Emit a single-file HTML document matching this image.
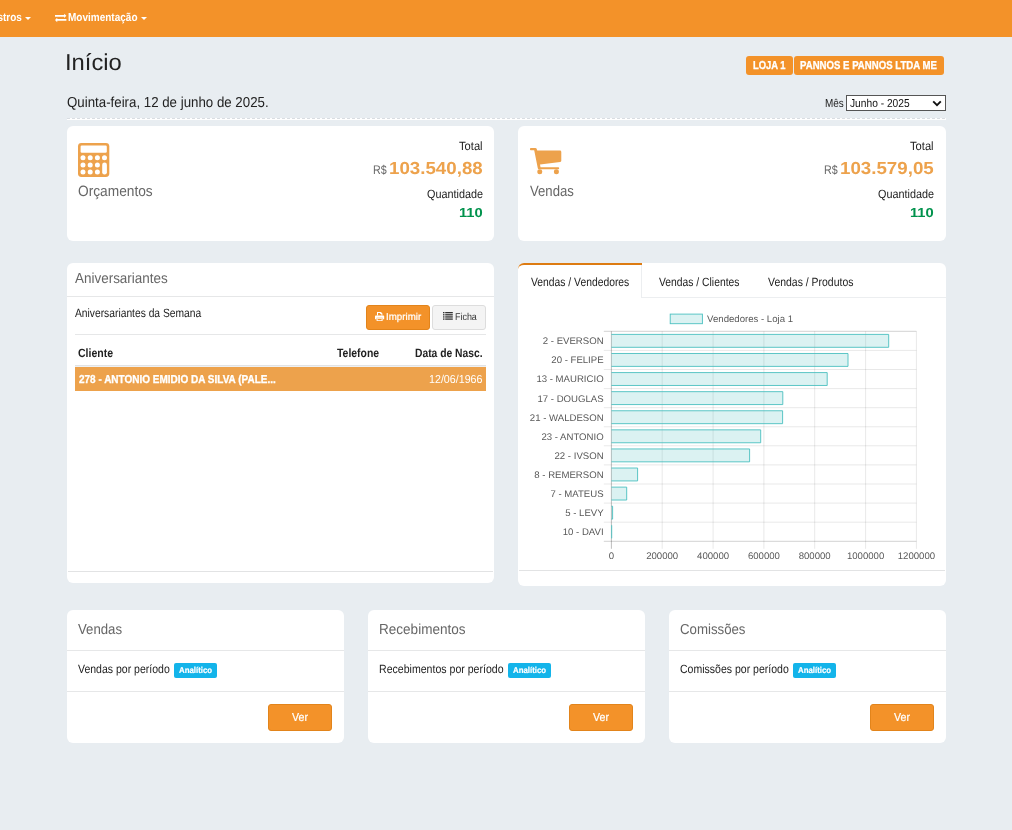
<!DOCTYPE html>
<html lang="pt-BR">
<head>
<meta charset="utf-8">
<title>Início</title>
<style>
*{box-sizing:border-box;margin:0;padding:0}
html,body{width:1012px;height:830px;overflow:hidden;background:#e8edf1}
body{font-family:"Liberation Sans",sans-serif;font-size:12px;color:#222;line-height:1}
#page{will-change:transform;text-rendering:geometricPrecision;position:relative;width:1012px;height:830px;overflow:hidden;background:#e8edf1}
#page div,#page svg,#page nav,.caret{position:absolute}
header,main,section,article{display:block}
.t{position:absolute;display:block;white-space:nowrap;font-weight:normal;transform-origin:0 0}
nav{left:0;top:0;width:1012px;height:37px;background:#f39229}
.caret{width:0;height:0;border-left:3px solid transparent;border-right:3px solid transparent;border-top:3px solid #fff}
.box{background:#fff;border-radius:6px}
.hl{height:1px;background:#e6e7e8}
.sb{-webkit-text-stroke:0.2px currentColor}
.xb{-webkit-text-stroke:0.3px currentColor}
.tag{background:#f39229;border-radius:3px}
.btn{border-radius:3px}
.btn-o{background:#f39229;border:1px solid #e2841b}
.btn-g{background:#f4f4f4;border:1px solid #ddd}
.info{background:#13b4ea;border-radius:2px}
svg{display:block;overflow:visible}
svg text{font-family:"Liberation Sans",sans-serif}
</style>
</head>
<body>
<div id="page">

<nav>
<span class="t" style="left:-27.41px;top:12px;font-size:11.5px;line-height:12px;color:#fff;font-weight:bold;transform:scaleX(0.870)">Cadastros</span>
<span class="caret" style="left:25px;top:17px"></span>
<svg style="left:55px;top:11.8px" width="11.4" height="11.4" viewBox="0 0 1792 1792"><path d="M0 480H1440V256L1792 608L1440 960V736H0ZM1792 1120H352V896L0 1248L352 1600V1376H1792Z" fill="#fff"/></svg>
<span class="t" style="left:68.13px;top:12px;font-size:11.5px;line-height:12px;color:#fff;font-weight:bold;transform:scaleX(0.870)">Movimentação</span>
<span class="caret" style="left:141px;top:17px"></span>
</nav>
<header>
<h1 class="t" style="left:65.41px;top:49px;font-size:23px;line-height:26px;color:#222;transform:scaleX(1.033)">Início</h1>
<div class="tag" style="left:746px;top:56px;width:47px;height:19px"></div>
<div class="tag" style="left:794px;top:56px;width:150px;height:19px"></div>
<span class="t xb" style="left:752.87px;top:60px;font-size:11.5px;line-height:12px;color:#fff;font-weight:bold;transform:scaleX(0.818)">LOJA 1</span>
<span class="t xb" style="left:800.36px;top:60px;font-size:11.5px;line-height:12px;color:#fff;font-weight:bold;transform:scaleX(0.836)">PANNOS E PANNOS LTDA ME</span>
<span class="t" style="left:66.57px;top:95px;font-size:14.5px;line-height:16px;color:#222;transform:scaleX(0.916)">Quinta-feira, 12 de junho de 2025.</span>
<span class="t" style="left:824.98px;top:98px;font-size:11.5px;line-height:12px;color:#222;transform:scaleX(0.864)">Mês</span>
<div style="left:846px;top:95px;width:100px;height:16px;background:#fff;border:1px solid #555"></div>
<span class="t" style="left:850.14px;top:98px;font-size:11.5px;line-height:12px;color:#111;transform:scaleX(0.888)">Junho - 2025</span>
<svg style="left:932px;top:100px" width="10" height="7" viewBox="0 0 10 7"><path d="M1.2 1.3L5 5.1l3.8-3.8" fill="none" stroke="#111" stroke-width="1.9"/></svg>
<div style="left:67px;top:118px;width:879px;height:2px;background:#fff"></div>
<div style="left:67px;top:118px;width:879px;height:1px;background:repeating-linear-gradient(90deg,#d9dde2 0,#d9dde2 3px,transparent 3px,transparent 5px)"></div>
</header>
<main>
<section>
<div class="box" style="left:67px;top:126px;width:427px;height:115px"></div>
<div class="box" style="left:518px;top:126px;width:428px;height:115px"></div>
<svg style="left:78.4px;top:143px" width="31.3" height="34" viewBox="0 0 313 340">
<rect x="0" y="0" width="313" height="340" rx="34" fill="#eda24c"/>
<rect x="26" y="26" width="262" height="72" rx="12" fill="#fff"/>
<g fill="#fff">
<circle cx="50" cy="148" r="25"/><circle cx="122" cy="148" r="25"/><circle cx="194" cy="148" r="25"/><circle cx="265" cy="148" r="25"/>
<circle cx="50" cy="219" r="25"/><circle cx="122" cy="219" r="25"/><circle cx="194" cy="219" r="25"/>
<circle cx="50" cy="290" r="25"/><circle cx="122" cy="290" r="25"/><circle cx="194" cy="290" r="25"/>
<rect x="242" y="194" width="47" height="121" rx="23"/>
</g></svg>
<svg style="left:530px;top:147.8px" width="31.3" height="26.2" viewBox="0 0 313 262">
<g fill="#eda24c">
<path d="M0 8 Q0 0 8 0 H52 Q66 0 69 14 L72 26 H300 Q313 26 313 39 V128 Q313 139 302 141 L100 165 L105 192 H282 Q292 192 292 202 Q292 212 282 212 H90 Q80 212 78 202 L42 22 H8 Q0 22 0 14 Z"/>
<circle cx="98" cy="238" r="25"/><circle cx="264" cy="238" r="25"/>
</g></svg>
<span class="t" style="left:77.85px;top:183px;font-size:15px;line-height:17px;color:#666;transform:scaleX(0.914)">Orçamentos</span>
<span class="t" style="left:530.14px;top:183px;font-size:15px;line-height:17px;color:#666;transform:scaleX(0.876)">Vendas</span>
<span class="t" style="left:459.05px;top:139px;font-size:12px;line-height:14px;color:#222;transform:scaleX(0.931)">Total</span>
<span class="t" style="left:372.52px;top:163px;font-size:12.5px;line-height:14px;color:#666;transform:scaleX(0.854)">R$</span>
<span class="t" style="left:389.02px;top:158px;font-size:17.5px;line-height:20px;color:#eda24c;font-weight:bold;transform:scaleX(1.070)">103.540,88</span>
<span class="t" style="left:426.69px;top:187px;font-size:12px;line-height:14px;color:#222;transform:scaleX(0.902)">Quantidade</span>
<span class="t" style="left:459.07px;top:205px;font-size:13px;line-height:15px;color:#00924c;font-weight:bold;transform:scaleX(1.131)">110</span>
<span class="t" style="left:910.45px;top:139px;font-size:12px;line-height:14px;color:#222;transform:scaleX(0.931)">Total</span>
<span class="t" style="left:823.92px;top:163px;font-size:12.5px;line-height:14px;color:#666;transform:scaleX(0.854)">R$</span>
<span class="t" style="left:840.42px;top:158px;font-size:17.5px;line-height:20px;color:#eda24c;font-weight:bold;transform:scaleX(1.070)">103.579,05</span>
<span class="t" style="left:878.09px;top:187px;font-size:12px;line-height:14px;color:#222;transform:scaleX(0.902)">Quantidade</span>
<span class="t" style="left:910.47px;top:205px;font-size:13px;line-height:15px;color:#00924c;font-weight:bold;transform:scaleX(1.131)">110</span>
</section>
<section>
<div class="box" style="left:67px;top:263px;width:427px;height:320px"></div>
<h2 class="t" style="left:74.77px;top:271px;font-size:14.5px;line-height:16px;color:#666;transform:scaleX(0.928)">Aniversariantes</h2>
<div class="hl" style="left:67px;top:296px;width:427px"></div>
<span class="t" style="left:74.78px;top:306px;font-size:12px;line-height:14px;color:#222;transform:scaleX(0.856)">Aniversariantes da Semana</span>
<div class="btn btn-o" style="left:366px;top:305px;width:64px;height:25px"></div>
<div class="btn btn-g" style="left:432px;top:305px;width:54px;height:25px"></div>
<svg style="left:374.8px;top:312px" width="9.2" height="9" viewBox="0 0 92 90">
<g fill="#fff"><path d="M20 0h40l14 14v22H64V20H52V10H30v26H20z"/>
<path d="M8 34h76q8 0 8 8v30H76V58H16v14H0V42q0-8 8-8z"/>
<path d="M16 62h60v28H16zm10 8v12h40V70z" fill-rule="evenodd"/></g></svg>
<span class="t sb" style="left:385.8px;top:312px;font-size:10px;line-height:11px;color:#fff;transform:scaleX(0.974)">Imprimir</span>
<svg style="left:442.6px;top:312.2px" width="9.8" height="7.8" viewBox="0 0 98 78">
<g fill="#333"><rect x="0" y="0" width="15" height="13"/><rect x="22" y="0" width="76" height="13"/>
<rect x="0" y="21.5" width="15" height="13"/><rect x="22" y="21.5" width="76" height="13"/>
<rect x="0" y="43" width="15" height="13"/><rect x="22" y="43" width="76" height="13"/>
<rect x="0" y="64.5" width="15" height="13"/><rect x="22" y="64.5" width="76" height="13"/></g></svg>
<span class="t" style="left:455.07px;top:312px;font-size:10px;line-height:11px;color:#333;transform:scaleX(0.893)">Ficha</span>
<div class="hl" style="left:75px;top:334px;width:411px"></div>
<span class="t" style="left:78.27px;top:346px;font-size:12px;line-height:14px;color:#222;font-weight:bold;transform:scaleX(0.877)">Cliente</span>
<span class="t" style="left:337.28px;top:346px;font-size:12px;line-height:14px;color:#222;font-weight:bold;transform:scaleX(0.870)">Telefone</span>
<span class="t" style="left:415.41px;top:346px;font-size:12px;line-height:14px;color:#222;font-weight:bold;transform:scaleX(0.858)">Data de Nasc.</span>
<div style="left:75px;top:365px;width:411px;height:1px;background:#e2e3e4"></div>
<div style="left:75px;top:366px;width:411px;height:1px;background:#eef1f4"></div>
<div style="left:75px;top:367px;width:411px;height:24px;background:#eda24c"></div>
<span class="t xb" style="left:78.55px;top:374px;font-size:11.5px;line-height:12px;color:#fff;font-weight:bold;transform:scaleX(0.868)">278 - ANTONIO EMIDIO DA SILVA (PALE...</span>
<span class="t" style="left:429.19px;top:374px;font-size:11.5px;line-height:12px;color:#fff;transform:scaleX(0.929)">12/06/1966</span>
<div class="hl" style="left:68px;top:571px;width:425px;background:#e2e3e4"></div>
</section>
<section>
<div class="box" style="left:518px;top:263px;width:428px;height:323px"></div>
<div style="left:642px;top:297px;width:304px;height:1px;background:#eceef0"></div>
<div style="left:641px;top:265px;width:1px;height:33px;background:#eceef0"></div>
<div style="left:518px;top:263px;width:124px;height:10px;border-top:2px solid #dd7b12;border-top-left-radius:6px"></div>
<span class="t" style="left:530.85px;top:275px;font-size:12px;line-height:14px;color:#222;transform:scaleX(0.861)">Vendas / Vendedores</span>
<span class="t" style="left:658.55px;top:275px;font-size:12px;line-height:14px;color:#222;transform:scaleX(0.861)">Vendas / Clientes</span>
<span class="t" style="left:768.45px;top:275px;font-size:12px;line-height:14px;color:#222;transform:scaleX(0.871)">Vendas / Produtos</span>
<div class="hl" style="left:519px;top:570px;width:426px;background:#e2e3e4"></div>
<svg style="left:518px;top:298px" width="428" height="272" viewBox="518 298 428 272">
<rect x="670.2" y="314.1" width="32.2" height="9.6" fill="rgba(75,192,192,0.2)" stroke="rgb(75,192,192)" stroke-width="0.9"/>
<text x="707.1" y="322.4" font-size="9.6" fill="#595959">Vendedores - Loja 1</text>
<g stroke="rgba(0,0,0,0.11)" stroke-width="0.85" fill="none">
<path d="M662.2 331.3V548.8"/>
<path d="M713.1 331.3V548.8"/>
<path d="M763.9 331.3V548.8"/>
<path d="M814.7 331.3V548.8"/>
<path d="M865.6 331.3V548.8"/>
<path d="M916.4 331.3V548.8"/>
<path d="M603.8 350.4H916.4"/>
<path d="M603.8 369.5H916.4"/>
<path d="M603.8 388.6H916.4"/>
<path d="M603.8 407.7H916.4"/>
<path d="M603.8 426.8H916.4"/>
<path d="M603.8 445.8H916.4"/>
<path d="M603.8 464.9H916.4"/>
<path d="M603.8 484.0H916.4"/>
<path d="M603.8 503.1H916.4"/>
<path d="M603.8 522.2H916.4"/>
</g>
<g stroke="rgba(0,0,0,0.2)" stroke-width="0.9" fill="none">
<path d="M603.8 331.3H916.4"/>
<path d="M603.8 541.3H916.4"/>
</g>
<path d="M611.4 331.3V548.8" stroke="rgba(0,0,0,0.3)" stroke-width="0.85" fill="none"/>
<g fill="rgba(75,192,192,0.2)" stroke="none">
<rect x="611.4" y="334.40" width="277.3" height="12.90"/>
<rect x="611.4" y="353.49" width="236.6" height="12.90"/>
<rect x="611.4" y="372.58" width="215.8" height="12.90"/>
<rect x="611.4" y="391.67" width="171.4" height="12.90"/>
<rect x="611.4" y="410.76" width="171.2" height="12.90"/>
<rect x="611.4" y="429.85" width="149.3" height="12.90"/>
<rect x="611.4" y="448.94" width="138.2" height="12.90"/>
<rect x="611.4" y="468.03" width="26.2" height="12.90"/>
<rect x="611.4" y="487.12" width="15.3" height="12.90"/>
<rect x="611.4" y="506.21" width="1.2" height="12.90"/>
<rect x="611.4" y="525.30" width="0.3" height="12.90"/>
</g>
<g fill="none" stroke="rgb(75,192,192)" stroke-width="0.9">
<path d="M611.4 334.40H888.7V347.30H611.4"/>
<path d="M611.4 353.49H848.0V366.39H611.4"/>
<path d="M611.4 372.58H827.2V385.48H611.4"/>
<path d="M611.4 391.67H782.8V404.57H611.4"/>
<path d="M611.4 410.76H782.6V423.66H611.4"/>
<path d="M611.4 429.85H760.7V442.75H611.4"/>
<path d="M611.4 448.94H749.6V461.84H611.4"/>
<path d="M611.4 468.03H637.6V480.93H611.4"/>
<path d="M611.4 487.12H626.7V500.02H611.4"/>
<path d="M611.4 506.21H612.6V519.11H611.4"/>
<path d="M611.4 525.30H611.7V538.20H611.4"/>
</g>
<g font-size="9.6" fill="#595959" text-anchor="end">
<text x="603.6" y="344.2">2 - EVERSON</text>
<text x="603.6" y="363.3">20 - FELIPE</text>
<text x="603.6" y="382.4">13 - MAURICIO</text>
<text x="603.6" y="401.5">17 - DOUGLAS</text>
<text x="603.6" y="420.6">21 - WALDESON</text>
<text x="603.6" y="439.7">23 - ANTONIO</text>
<text x="603.6" y="458.8">22 - IVSON</text>
<text x="603.6" y="477.9">8 - REMERSON</text>
<text x="603.6" y="497.0">7 - MATEUS</text>
<text x="603.6" y="516.1">5 - LEVY</text>
<text x="603.6" y="535.2">10 - DAVI</text>
</g>
<g font-size="9.6" fill="#595959" text-anchor="middle">
<text x="611.4" y="559.0">0</text>
<text x="662.2" y="559.0">200000</text>
<text x="713.1" y="559.0">400000</text>
<text x="763.9" y="559.0">600000</text>
<text x="814.7" y="559.0">800000</text>
<text x="865.6" y="559.0">1000000</text>
<text x="916.4" y="559.0">1200000</text>
</g>
</svg>
</section>
<section>
<div class="box" style="left:67px;top:610px;width:277px;height:133px"></div>
<h2 class="t" style="left:78.44px;top:622px;font-size:14.5px;line-height:16px;color:#666;transform:scaleX(0.910)">Vendas</h2>
<div class="hl" style="left:67px;top:650px;width:277px"></div>
<span class="t" style="left:78.45px;top:662px;font-size:12px;line-height:14px;color:#222;transform:scaleX(0.876)">Vendas por período</span>
<div class="info" style="left:174.0px;top:663px;width:43px;height:15px"></div>
<span class="t sb" style="left:179px;top:665px;font-size:8.5px;line-height:10px;color:#fff;font-weight:bold;transform:scaleX(0.922)">Analítico</span>
<div class="hl" style="left:67px;top:691px;width:277px"></div>
<div class="btn btn-o" style="left:268px;top:704px;width:64px;height:27px"></div>
<span class="t sb" style="left:291.65px;top:712px;font-size:11.5px;line-height:12px;color:#fff;transform:scaleX(0.922)">Ver</span>
</section>
<section>
<div class="box" style="left:368px;top:610px;width:277px;height:133px"></div>
<h2 class="t" style="left:378.89px;top:622px;font-size:14.5px;line-height:16px;color:#666;transform:scaleX(0.934)">Recebimentos</h2>
<div class="hl" style="left:368px;top:650px;width:277px"></div>
<span class="t" style="left:379.13px;top:662px;font-size:12px;line-height:14px;color:#222;transform:scaleX(0.881)">Recebimentos por período</span>
<div class="info" style="left:508.0px;top:663px;width:43px;height:15px"></div>
<span class="t sb" style="left:513px;top:665px;font-size:8.5px;line-height:10px;color:#fff;font-weight:bold;transform:scaleX(0.922)">Analítico</span>
<div class="hl" style="left:368px;top:691px;width:277px"></div>
<div class="btn btn-o" style="left:569px;top:704px;width:64px;height:27px"></div>
<span class="t sb" style="left:592.65px;top:712px;font-size:11.5px;line-height:12px;color:#fff;transform:scaleX(0.922)">Ver</span>
</section>
<section>
<div class="box" style="left:669px;top:610px;width:277px;height:133px"></div>
<h2 class="t" style="left:680.03px;top:622px;font-size:14.5px;line-height:16px;color:#666;transform:scaleX(0.913)">Comissões</h2>
<div class="hl" style="left:669px;top:650px;width:277px"></div>
<span class="t" style="left:680.17px;top:662px;font-size:12px;line-height:14px;color:#222;transform:scaleX(0.877)">Comissões por período</span>
<div class="info" style="left:793.3px;top:663px;width:43px;height:15px"></div>
<span class="t sb" style="left:798.3px;top:665px;font-size:8.5px;line-height:10px;color:#fff;font-weight:bold;transform:scaleX(0.922)">Analítico</span>
<div class="hl" style="left:669px;top:691px;width:277px"></div>
<div class="btn btn-o" style="left:870px;top:704px;width:64px;height:27px"></div>
<span class="t sb" style="left:893.65px;top:712px;font-size:11.5px;line-height:12px;color:#fff;transform:scaleX(0.922)">Ver</span>
</section>
</main>
</div>
</body>
</html>
